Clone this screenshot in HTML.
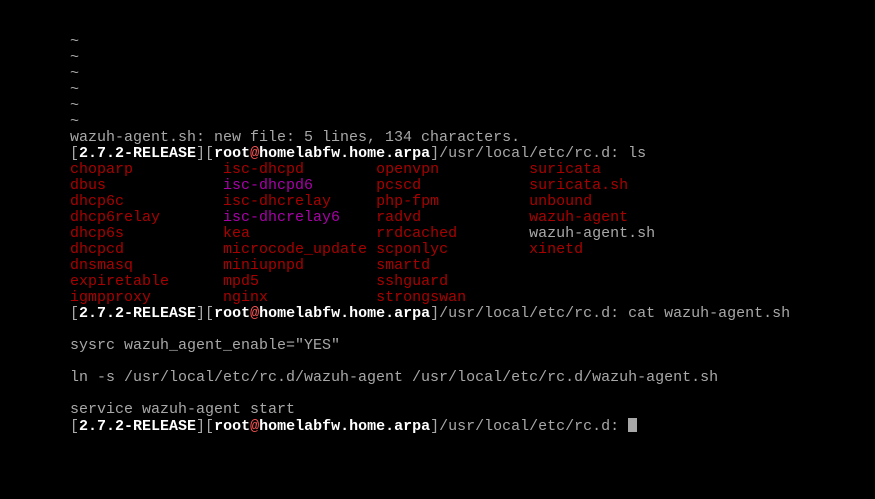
<!DOCTYPE html>
<html><head><meta charset="utf-8"><style>
html,body{margin:0;padding:0;background:#000;width:875px;height:499px;overflow:hidden}
pre{position:absolute;left:70px;top:34px;margin:0;font-family:"Liberation Mono","DejaVu Sans Mono",monospace;font-size:15px;line-height:16px;color:#a8a8a8}
.w{color:#fff;font-weight:bold}.a{color:#ff5555}.r{color:#a80000}.m{color:#a800a8}
.c{display:inline-block;width:9px;height:14px;background:#a8a8a8;vertical-align:-2px}
</style></head><body><pre>~
~
~
~
~
~
wazuh-agent.sh: new file: 5 lines, 134 characters.
[<span class="w">2.7.2-RELEASE</span>][<span class="w">root</span><span class="a">@</span><span class="w">homelabfw.home.arpa</span>]/usr/local/etc/rc.d: ls
<span class="r">choparp          </span><span class="r">isc-dhcpd        </span><span class="r">openvpn          </span><span class="r">suricata</span>
<span class="r">dbus             </span><span class="m">isc-dhcpd6       </span><span class="r">pcscd            </span><span class="r">suricata.sh</span>
<span class="r">dhcp6c           </span><span class="r">isc-dhcrelay     </span><span class="r">php-fpm          </span><span class="r">unbound</span>
<span class="r">dhcp6relay       </span><span class="m">isc-dhcrelay6    </span><span class="r">radvd            </span><span class="r">wazuh-agent</span>
<span class="r">dhcp6s           </span><span class="r">kea              </span><span class="r">rrdcached        </span>wazuh-agent.sh
<span class="r">dhcpcd           </span><span class="r">microcode_update </span><span class="r">scponlyc         </span><span class="r">xinetd</span>
<span class="r">dnsmasq          </span><span class="r">miniupnpd        </span><span class="r">smartd</span>
<span class="r">expiretable      </span><span class="r">mpd5             </span><span class="r">sshguard</span>
<span class="r">igmpproxy        </span><span class="r">nginx            </span><span class="r">strongswan</span>
[<span class="w">2.7.2-RELEASE</span>][<span class="w">root</span><span class="a">@</span><span class="w">homelabfw.home.arpa</span>]/usr/local/etc/rc.d: cat wazuh-agent.sh

sysrc wazuh_agent_enable="YES"

ln -s /usr/local/etc/rc.d/wazuh-agent /usr/local/etc/rc.d/wazuh-agent.sh

service wazuh-agent start
[<span class="w">2.7.2-RELEASE</span>][<span class="w">root</span><span class="a">@</span><span class="w">homelabfw.home.arpa</span>]/usr/local/etc/rc.d: <span class="c"></span></pre></body></html>
